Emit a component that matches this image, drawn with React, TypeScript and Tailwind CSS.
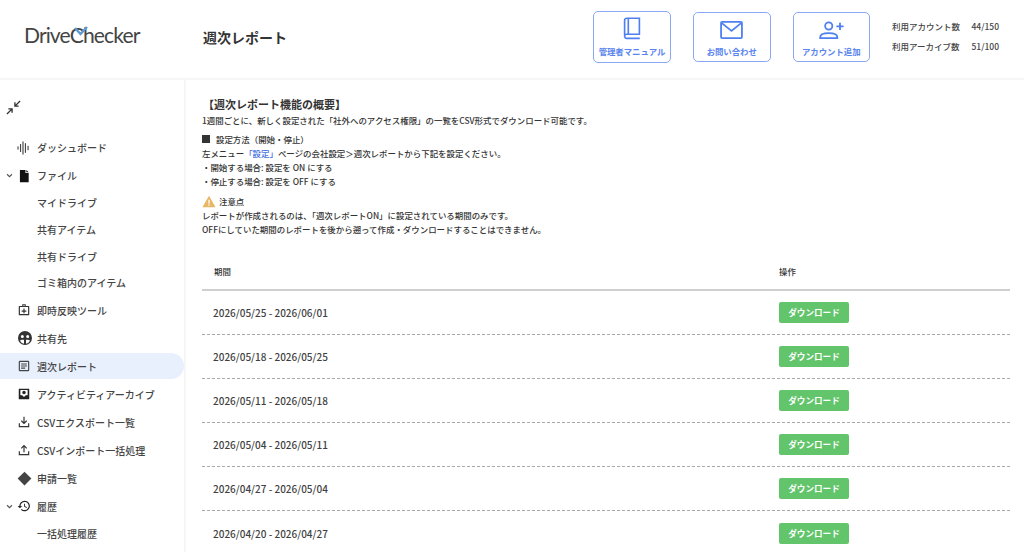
import React from "react";

const Ic = ({ d, fill = "currentColor" }: { d: string; fill?: string }) => (
  <svg viewBox="0 0 24 24" className="w-[14px] h-[14px] shrink-0" fill={fill}>
    <path d={d} />
  </svg>
);

const Chevron = () => (
  <svg viewBox="0 0 10 10" className="w-[7px] h-[7px]" fill="none" stroke="#555" strokeWidth="1.6">
    <path d="M1.500 3.200 5 6.800l3.500-3.600" />
  </svg>
);

const icons: Record<string, React.ReactNode> = {
  dash: (
    <svg viewBox="0 0 16 16" className="w-[14px] h-[14px]" fill="#444">
      <rect x="0.5" y="6.2" width="1.3" height="3.6" />
      <rect x="3.4" y="3.5" width="1.3" height="9" />
      <rect x="6.2" y="0.5" width="1.3" height="15" />
      <rect x="9" y="2.5" width="1.3" height="11" />
      <rect x="12" y="5.5" width="1.3" height="5" />
    </svg>
  ),
  file: <Ic d="M5 1.500h9.500v5.500H20v15.500H5z M16 1.500 20 5.500h-4z" fill="#111" />,
  tool: <Ic d="M9 2h6v3h5a1 1 0 0 1 1 1v14a1 1 0 0 1-1 1H4a1 1 0 0 1-1-1V6a1 1 0 0 1 1-1h5V2zm1.700 1.700V5h2.600V3.700h-2.600zM5 7v12h14V7H5zm6 2.500h2V13h3v2h-3v2.500h-2V15H8v-2h3V9.500z" fill="#333" />,
  share: (
    <svg viewBox="0 0 24 24" className="w-[16px] h-[16px]" fill="#333">
      <path d="M12 1.500a10.500 10.500 0 1 0 0 21 10.500 10.500 0 0 0 0-21zM8 7.500a2.300 2.300 0 1 1 0 4.600 2.300 2.300 0 0 1 0-4.600zm8 0a2.300 2.300 0 1 1 0 4.600 2.300 2.300 0 0 1 0-4.600zM4.500 16c1-1.500 5-2 6-1v5.500A8 8 0 0 1 4.500 16zm9 4.500V15c1-1 5-.5 6 1a8 8 0 0 1-6 4.500z" />
    </svg>
  ),
  report: <Ic d="M5 3h14a2 2 0 0 1 2 2v14a2 2 0 0 1-2 2H5a2 2 0 0 1-2-2V5a2 2 0 0 1 2-2zm0 2v14h14V5H5zm2 2.500h10v1.800H7V7.500zm0 3.600h10v1.800H7v-1.800zm0 3.600h7v1.800H7v-1.800z" fill="#444" />,
  archive: <Ic d="M4 3h16a1 1 0 0 1 1 1v16a1 1 0 0 1-1 1H4a1 1 0 0 1-1-1V4a1 1 0 0 1 1-1zm1.800 2v9h3.700a2.500 2.500 0 0 0 5 0h3.700V5H5.800zM12 6.500a3 3 0 1 1 0 6 3 3 0 0 1 0-6z" fill="#222" />,
  down: <Ic d="M11 3h2v9.200l3-3 1.400 1.400L12 16l-5.400-5.400L8 9.200l3 3V3zM3 14h2v5h14v-5h2v7H3v-7z" fill="#333" />,
  up: <Ic d="M12 3l5.400 5.400L16 9.800l-3-3V16h-2V6.800l-3 3-1.400-1.400L12 3zM3 14h2v5h14v-5h2v7H3v-7z" fill="#333" />,
  diamond: (
    <svg viewBox="0 0 24 24" className="w-[15px] h-[15px]" fill="#444">
      <path d="M12 1l11 11-11 11L1 12z" />
    </svg>
  ),
  history: <Ic d="M13 3a9 9 0 0 0-9 9H1l3.900 3.900L9 12H6a7 7 0 1 1 2.100 5L6.700 18.400A9 9 0 1 0 13 3zm-1 5v5l4.300 2.500.7-1.200-3.500-2.100V8H12z" fill="#222" />,
};

type Item = { label: string; icon?: string; chevron?: boolean; active?: boolean };

const nav: Item[] = [
  { label: "ダッシュボード", icon: "dash" },
  { label: "ファイル", icon: "file", chevron: true },
  { label: "マイドライブ" },
  { label: "共有アイテム" },
  { label: "共有ドライブ" },
  { label: "ゴミ箱内のアイテム" },
  { label: "即時反映ツール", icon: "tool" },
  { label: "共有先", icon: "share" },
  { label: "週次レポート", icon: "report", active: true },
  { label: "アクティビティアーカイブ", icon: "archive" },
  { label: "CSVエクスポート一覧", icon: "down" },
  { label: "CSVインポート一括処理", icon: "up" },
  { label: "申請一覧", icon: "diamond" },
  { label: "履歴", icon: "history", chevron: true },
  { label: "一括処理履歴" },
];

const rows = [
  "2026/05/25 - 2026/06/01",
  "2026/05/18 - 2026/05/25",
  "2026/05/11 - 2026/05/18",
  "2026/05/04 - 2026/05/11",
  "2026/04/27 - 2026/05/04",
  "2026/04/20 - 2026/04/27",
];

export default function App() {
  return (
    <div className="w-[1024px] h-[552px] overflow-hidden bg-white flex flex-col font-['Noto_Sans_CJK_JP','Noto_Sans',sans-serif] text-[#333]">
      <header className="h-[80px] shrink-0 border-b-2 border-[#f6f6f6] flex items-start">
        <div className="relative w-[203px] h-[78px] shrink-0 pl-[24px] pt-[21px] text-[21.100px] leading-[28px] tracking-[-0.9px] font-['Lato',sans-serif] font-normal text-[#444]">
          <span>DriveChecker</span>
          <svg viewBox="0 0 14 10" className="absolute left-[74px] top-[26px] w-[14px] h-[10px]" fill="none" stroke="#5b9bd5" strokeWidth="2.400">
            <path d="M1 2 6.500 8 13 1" />
          </svg>
        </div>
        <h1 className="text-[14px] leading-[20px] font-bold text-[#333] mt-[27px]">週次レポート</h1>
        <div className="ml-auto flex items-start gap-[22px] mr-[25px] mt-[11px]">
          <div className="w-[78px] h-[52px] border border-[#8aa8f5] rounded-[5px] flex flex-col items-center pt-[5px]">
            <svg viewBox="0 0 24 28" className="w-[20px] h-[23px]" fill="none" stroke="#4f7ff0" strokeWidth="2">
              <path d="M3 22V4a2.500 2.500 0 0 1 2.500-2.500H21V21H5.500A2.500 2.500 0 0 0 3 23.500 2.500 2.500 0 0 0 5.500 26H21.500M7.500 2v18" />
            </svg>
            <span className="mt-[5px] text-[8.400px] leading-[13px] font-bold text-[#5a85ee] whitespace-nowrap">管理者マニュアル</span>
          </div>
          <div className="w-[77.500px] h-[50px] mt-[1px] border border-[#8aa8f5] rounded-[5px] flex flex-col items-center pt-[8px]">
            <svg viewBox="0 0 24 19" className="w-[23px] h-[18px]" fill="none" stroke="#4f7ff0" strokeWidth="1.900">
              <rect x="1" y="1" width="22" height="17" rx="1" />
              <path d="M1.500 2 12 10.500 22.500 2" />
            </svg>
            <span className="mt-[6px] text-[8.400px] leading-[13px] font-bold text-[#5a85ee] whitespace-nowrap">お問い合わせ</span>
          </div>
          <div className="w-[77.500px] h-[50px] mt-[1px] border border-[#8aa8f5] rounded-[5px] flex flex-col items-center pt-[8px]">
            <svg viewBox="0 0 28 20" className="w-[26px] h-[18px]" fill="none" stroke="#4f7ff0" strokeWidth="2">
              <circle cx="11.500" cy="5.500" r="4" />
              <path d="M2 19v-1c0-3 4-4.500 9.500-4.500S21 15 21 18v1zM20 6h8M24 2v8" />
            </svg>
            <span className="mt-[6px] text-[8.400px] leading-[13px] font-bold text-[#5a85ee] whitespace-nowrap">アカウント追加</span>
          </div>
          <div className="pt-[5px] text-[8.500px] leading-[20px] text-[#444] font-medium">
            <div className="flex w-[107px] justify-between"><span>利用アカウント数</span><span>44/150</span></div>
            <div className="flex w-[107px] justify-between"><span>利用アーカイブ数</span><span>51/100</span></div>
          </div>
        </div>
      </header>

      <div className="flex flex-1 min-h-0">
        <aside className="w-[186px] shrink-0 border-r-2 border-[#f6f6f6] overflow-hidden">
          <div className="h-[53.500px] pl-[6px] pt-[20px]">
            <svg viewBox="0 0 16 16" className="w-[15px] h-[15px]" fill="none" stroke="#333" strokeWidth="1.400">
              <path d="M1 15 6.500 9.500M2.500 9.500h4v4M15 1 9.500 6.500M13.500 6.500h-4v-4" />
            </svg>
          </div>
          {nav.map((n) => (
            <div key={n.label} className={`flex items-center ${n.icon ? "h-[28px]" : "h-[26.700px]"}`}>
              <div className={`w-full h-[26px] flex items-center text-[10px] font-medium text-[#444] ${n.active ? "bg-[#e8f0fd] rounded-r-full" : ""}`}>
                <span className="w-[16px] flex justify-center pl-[3px] shrink-0">{n.chevron ? <Chevron /> : null}</span>
                <span className="w-[21px] flex justify-start items-center shrink-0 pl-[1px]">{n.icon ? icons[n.icon] : null}</span>
                <span className="whitespace-nowrap">{n.label}</span>
              </div>
            </div>
          ))}
        </aside>

        <main className="flex-1 min-w-0 pl-[16px] pr-[14px] pt-[16px] text-[#333]">
          <h2 className="text-[11px] leading-[17px] font-bold text-[#333] pl-[1px]">【週次レポート機能の概要】</h2>
          <p className="text-[8.450px] leading-[14px] font-medium">1週間ごとに、新しく設定された「社外へのアクセス権限」の一覧をCSV形式でダウンロード可能です。</p>
          <div className="flex items-center text-[8.450px] leading-[14px] font-medium mt-[5px]">
            <span className="w-[8px] h-[8px] bg-[#333] mr-[6px]" />
            <span>設定方法（開始・停止）</span>
          </div>
          <p className="text-[8.450px] leading-[14px] font-medium">
            左メニュー<span className="text-[#3f6fe0]">「設定」</span>ページの会社設定＞週次レポートから下記を設定ください。
          </p>
          <p className="text-[8.450px] leading-[14px] font-medium">・開始する場合: 設定を ON にする</p>
          <p className="text-[8.450px] leading-[14px] font-medium">・停止する場合: 設定を OFF にする</p>
          <div className="flex items-center text-[8.450px] leading-[14px] font-medium mt-[6px]">
            <svg viewBox="0 0 16 14" className="w-[14px] h-[13px] mr-[3px]">
              <path d="M8 0.500 15.500 13.500H.5z" fill="#e7b765" />
              <rect x="7.300" y="5" width="1.400" height="4.500" fill="#fff" />
              <rect x="7.300" y="10.300" width="1.400" height="1.500" fill="#fff" />
            </svg>
            <span>注意点</span>
          </div>
          <p className="text-[8.450px] leading-[14px] font-medium">レポートが作成されるのは、「週次レポートON」に設定されている期間のみです。</p>
          <p className="text-[8.450px] leading-[14px] font-medium">OFFにしていた期間のレポートを後から遡って作成・ダウンロードすることはできません。</p>

          <div className="mt-[19px]">
            <div className="h-[35.500px] border-b-2 border-[#cfcfcf] flex items-center text-[8.450px] font-medium">
              <span className="w-[577px] pl-[12px]">期間</span>
              <span>操作</span>
            </div>
            {rows.map((r) => (
              <div key={r} className="h-[44.200px] border-b border-dashed border-[#aaa] flex items-center">
                <span className="w-[577px] pl-[11px] text-[10px] font-medium text-[#3f3f3f]">{r}</span>
                <span className="w-[70px] h-[21px] rounded-[2px] bg-[#62c46b] text-white text-[8.600px] font-bold flex items-center justify-center">ダウンロード</span>
              </div>
            ))}
          </div>
        </main>
      </div>
    </div>
  );
}
